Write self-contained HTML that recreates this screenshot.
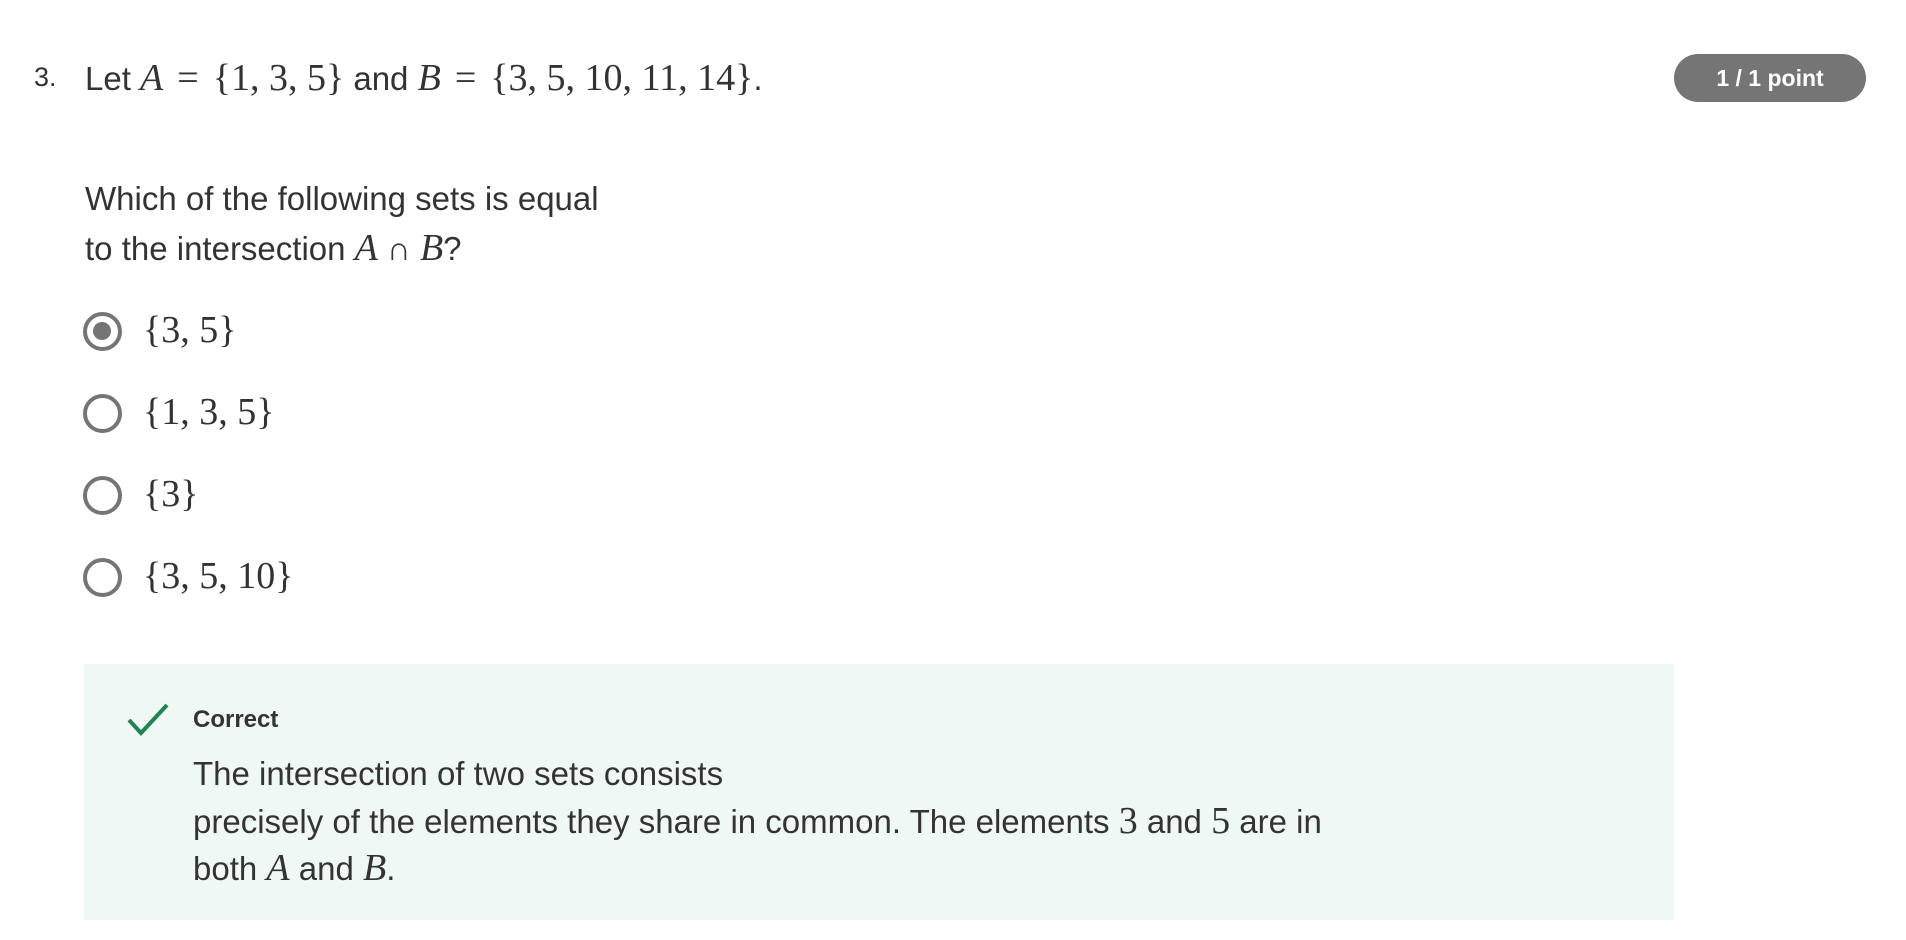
<!DOCTYPE html>
<html><head><meta charset="utf-8"><style>
body{margin:0;width:1906px;height:940px;background:#fff;font-family:"Liberation Sans",sans-serif;color:#333;position:relative;overflow:hidden}
.a{position:absolute;white-space:nowrap}
.m{font-family:"Liberation Serif",serif;font-size:38px}
.i{font-style:italic}
.e{margin:0 14px}
.t{font-size:33px}
.r{position:absolute;left:83px;width:39px;height:39px;border:4.5px solid #757575;border-radius:50%;box-sizing:border-box}
.r.s::after{content:"";position:absolute;left:6px;top:6px;width:18px;height:18px;border-radius:50%;background:#757575}
</style></head><body>
<div class="a" style="left:34px;top:62px;font-size:27px">3.</div>
<div class="a t" style="left:85px;top:56px">Let <span class="m"><span class="i">A</span><span class="e">=</span>{1, 3, 5}</span> and <span class="m"><span class="i">B</span><span class="e">=</span>{3, 5, 10, 11, 14}</span>.</div>
<div class="a" style="left:1674px;top:54px;width:192px;height:48px;border-radius:24px;background:#757575;color:#fff;font-weight:bold;font-size:23px;line-height:48px;text-align:center">1 / 1 point</div>
<div class="a t" style="left:85px;top:180px">Which of the following sets is equal</div>
<div class="a t" style="left:85px;top:226px">to the intersection <span class="m i">A</span> ∩ <span class="m i">B</span>?</div>
<div class="r s" style="top:312px"></div>
<div class="r" style="top:394px"></div>
<div class="r" style="top:476px"></div>
<div class="r" style="top:558px"></div>
<div class="a m" style="left:143px;top:308px">{3, 5}</div>
<div class="a m" style="left:143px;top:390px">{1, 3, 5}</div>
<div class="a m" style="left:143px;top:472px">{3}</div>
<div class="a m" style="left:143px;top:554px">{3, 5, 10}</div>
<div class="a" style="left:84px;top:664px;width:1590px;height:256px;background:#eff8f5"></div>
<svg class="a" style="left:126px;top:702px" width="44" height="36" viewBox="0 0 44 36"><path d="M3 18 L15 31 L41 3" fill="none" stroke="#1f8354" stroke-width="4"/></svg>
<div class="a" style="left:193px;top:706px;font-size:24px;font-weight:bold">Correct</div>
<div class="a t" style="left:193px;top:755px">The intersection of two sets consists</div>
<div class="a t" style="left:193px;top:799px">precisely of the elements they share in common. The elements <span class="m">3</span> and <span class="m">5</span> are in</div>
<div class="a t" style="left:193px;top:846px">both <span class="m i">A</span> and <span class="m i">B</span>.</div>
</body></html>
